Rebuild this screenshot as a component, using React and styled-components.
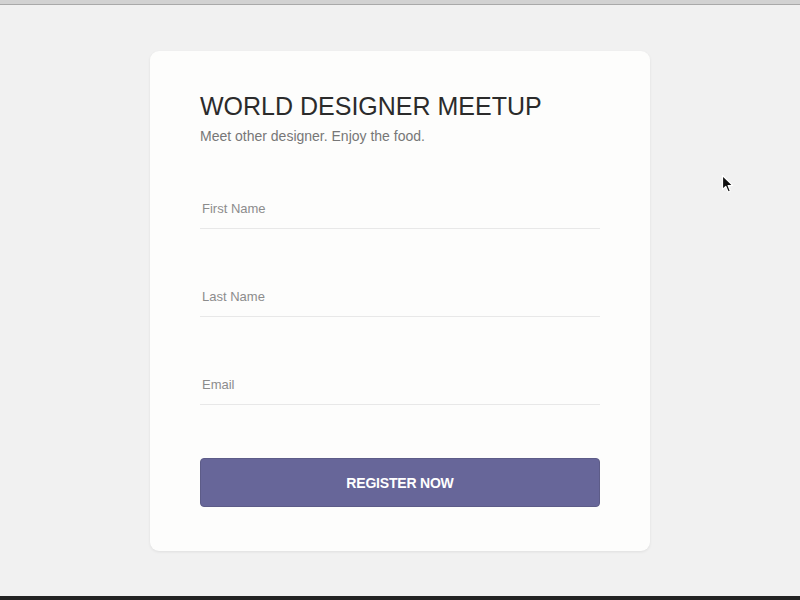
import styled, { createGlobalStyle } from "styled-components";

const GlobalStyle = createGlobalStyle`
  html, body {
    margin: 0;
    padding: 0;
    background: #f1f1f1;
    font-family: "Liberation Sans", Arial, sans-serif;
  }
  * {
    box-sizing: border-box;
  }
`;

const fields = ["First Name", "Last Name", "Email"];

const Pointer = () => (
  <svg width="14" height="20" viewBox="0 0 14 20">
    <path
      d="M1.5 1.5 L1.5 15.5 L4.8 12.4 L7.2 18 L9.4 17 L7.1 11.6 L11.6 11.4 Z"
      fill="#111"
      stroke="#fff"
      strokeWidth="1.2"
      strokeLinejoin="round"
    />
  </svg>
);

const App = () => {
  return (
    <Page>
      <GlobalStyle />
      <TopBar />
      <Stage>
        <Card>
          <Title>WORLD DESIGNER MEETUP</Title>
          <Subtitle>Meet other designer. Enjoy the food.</Subtitle>
          <Form onSubmit={(e) => e.preventDefault()}>
            {fields.map((f) => (
              <Field key={f} type="text" placeholder={f} />
            ))}
            <Button type="submit">REGISTER NOW</Button>
          </Form>
        </Card>
        <Cursor>
          <Pointer />
        </Cursor>
      </Stage>
      <BottomBar />
    </Page>
  );
};

const Page = styled.div`
  width: 800px;
  height: 600px;
  display: flex;
  flex-direction: column;
  overflow: hidden;
`;

const TopBar = styled.div`
  height: 5px;
  flex-shrink: 0;
  background: #d2d2d2;
  border-bottom: 1px solid #a9a9a9;
`;

const Stage = styled.div`
  position: relative;
  flex: 1;
  display: flex;
  justify-content: center;
  align-items: flex-start;
  padding-top: 46px;
  background: #f1f1f1;
`;

const Card = styled.div`
  width: 500px;
  height: 500px;
  background: #fdfdfc;
  border-radius: 9px;
  box-shadow: 0 1px 3px rgba(0, 0, 0, 0.08);
  padding: 41px 50px 44px;
`;

const Title = styled.h1`
  margin: 0;
  font-size: 25px;
  line-height: 29px;
  font-weight: 400;
  color: #2b2b2b;
`;

const Subtitle = styled.p`
  margin: 7px 0 0;
  font-size: 14px;
  line-height: 16px;
  color: #777;
`;

const Form = styled.form`
  display: flex;
  flex-direction: column;
  gap: 48px;
  margin-top: 45px;
`;

const Field = styled.input`
  height: 40px;
  width: 100%;
  border: none;
  border-bottom: 1px solid #e8e8e8;
  background: transparent;
  padding: 0 2px;
  font-family: "Liberation Sans", Arial, sans-serif;
  font-size: 13px;
  color: #333;
  outline: none;
  &::placeholder {
    color: #8c8c8c;
  }
`;

const Button = styled.button`
  margin-top: 5px;
  height: 49px;
  width: 100%;
  border: 1px solid #5d5c88;
  border-radius: 4px;
  background: #676699;
  color: #fff;
  font-family: "Liberation Sans", Arial, sans-serif;
  font-size: 14px;
  font-weight: 700;
  letter-spacing: -0.2px;
  cursor: pointer;
`;

const Cursor = styled.div`
  position: absolute;
  left: 721px;
  top: 169px;
  line-height: 0;
`;

const BottomBar = styled.div`
  height: 4px;
  flex-shrink: 0;
  background: #232323;
`;

export default App;
